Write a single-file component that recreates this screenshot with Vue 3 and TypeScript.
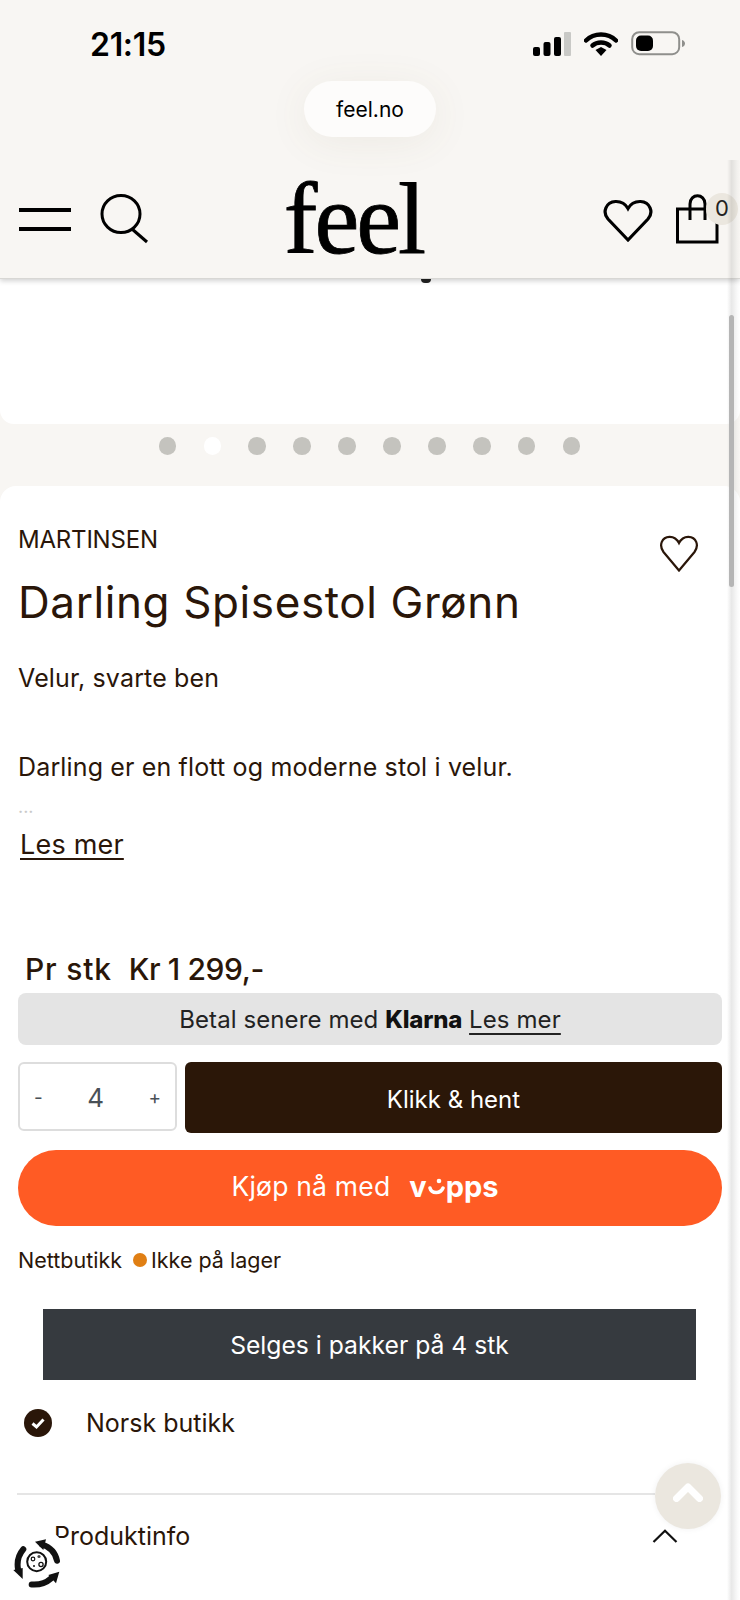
<script setup lang="ts">
const dots = Array.from({ length: 10 }, (_, i) => i)
</script>

<template>
  <div class="page">
    <header class="top">
      <div class="status">
        <span class="time">21:15</span>
        <div class="status-icons">
          <svg width="38" height="24" viewBox="0 0 38 24">
            <rect x="0" y="15" width="7" height="9" rx="2" fill="#000" />
            <rect x="10.500" y="10" width="7" height="14" rx="2" fill="#000" />
            <rect x="21" y="5" width="7" height="19" rx="2" fill="#000" />
            <rect x="31" y="0" width="7" height="24" rx="1" fill="#c9c9c6" />
          </svg>
          <svg width="34" height="24" viewBox="0 0 34 24">
            <path d="M2 8.500C10 0.500 24 0.500 32 8.500" fill="none" stroke="#000" stroke-width="4.500" stroke-linecap="round" />
            <path d="M8.500 13.500C13 9.500 21 9.500 25.500 13.500" fill="none" stroke="#000" stroke-width="4.500" stroke-linecap="round" />
            <path d="M11.500 18L17 15L22.500 18L17 24Z" fill="#000" />
          </svg>
          <svg class="battery" width="55" height="26" viewBox="0 0 55 26">
            <rect x="1.200" y="1.200" width="47" height="22" rx="7" fill="none" stroke="#8f8f8c" stroke-width="2" />
            <rect x="5" y="4.500" width="17" height="15.500" rx="5" fill="#000" />
            <path d="M51 9C53 9.500 54 11 54 12.500C54 14 53 15.500 51 16Z" fill="#8f8f8c" />
          </svg>
        </div>
      </div>
      <div class="pill-row">
        <span class="pill">feel.no</span>
      </div>
      <nav class="nav">
        <div class="nav-left">
          <span class="burger"><i></i><i></i></span>
          <svg class="search" width="50" height="50" viewBox="0 0 50 50">
            <ellipse cx="22" cy="20" rx="19" ry="18.500" fill="none" stroke="#000" stroke-width="3" />
            <path d="M33 35L48 48" stroke="#000" stroke-width="3" fill="none" />
          </svg>
        </div>
        <span class="logo">feel</span>
        <div class="nav-right">
          <svg class="heart" width="50" height="44" viewBox="0 0 50 44">
            <path d="M25 41L5 20C-1 13 3 3 12.500 2.500C18 2.300 22.500 5 25 9.500C27.500 5 32 2.300 37.500 2.500C47 3 51 13 45 20Z" fill="none" stroke="#000" stroke-width="3.200" stroke-linejoin="miter" />
          </svg>
          <div class="bag">
            <svg width="44" height="50" viewBox="0 0 44 50">
              <path d="M2.500 15H42V48H2.500Z" fill="none" stroke="#000" stroke-width="3" />
              <path d="M15 26V10C15 -1 30 -1 30 10V26" fill="none" stroke="#000" stroke-width="3" />
            </svg>
            <span class="bag-count">0</span>
          </div>
        </div>
      </nav>
    </header>

    <section class="hero">
      <span class="hero-tail"></span>
    </section>

    <div class="dots">
      <span v-for="d in dots" :key="d" class="dot" :class="{ active: d === 1 }"></span>
    </div>

    <main class="card">
      <div class="brand-row">
        <span class="brand">MARTINSEN</span>
        <svg class="fav" width="40" height="38" viewBox="0 0 40 38">
          <path d="M20 35.500L4.500 17C-0.500 10 3 2 10.500 1.800C14.500 1.700 18 4 20 8C22 4 25.500 1.700 29.500 1.800C37 2 40.500 10 35.500 17Z" fill="none" stroke="#2a1609" stroke-width="2.200" />
        </svg>
      </div>
      <h1 class="title">Darling Spisestol Grønn</h1>
      <p class="lead">Velur, svarte ben</p>
      <p class="desc">Darling er en flott og moderne stol i velur.</p>
      <p class="more-dots">...</p>
      <a class="read-more">Les mer</a>

      <div class="price">
        <span class="price-label">Pr stk</span>
        <span class="price-value">Kr 1 299,-</span>
      </div>
      <div class="klarna">
        <span>Betal senere med <b>Klarna</b> <u>Les mer</u></span>
      </div>

      <div class="buy-row">
        <div class="qty">
          <span class="qty-btn">-</span>
          <span class="qty-num">4</span>
          <span class="qty-btn">+</span>
        </div>
        <button class="pickup">Klikk &amp; hent</button>
      </div>

      <button class="vipps">
        <span>Kjøp nå med</span>
        <span class="vipps-logo">v<span class="smile"><svg width="17" height="20" viewBox="0 0 17 20"><circle cx="11" cy="4" r="2.300" fill="#fff" /><path d="M2 11C3.500 17 12.500 17 15 11" fill="none" stroke="#fff" stroke-width="3.500" stroke-linecap="round" /></svg></span>pps</span>
      </button>

      <div class="stock">
        <span>Nettbutikk</span>
        <span class="stock-dot"></span>
        <span>Ikke på lager</span>
      </div>

      <div class="pack">Selges i pakker på 4 stk</div>

      <div class="usp">
        <svg width="28" height="28" viewBox="0 0 28 28">
          <circle cx="14" cy="14" r="14" fill="#2a1609" />
          <path d="M8.500 14.500L12.500 18L19.500 10.500" fill="none" stroke="#fff" stroke-width="3" />
        </svg>
        <span>Norsk butikk</span>
      </div>

      <hr class="divider" />

      <div class="accordion">
        <span>Produktinfo</span>
        <svg width="26" height="14" viewBox="0 0 26 14">
          <path d="M1.500 13L13 1.800L24.500 13" fill="none" stroke="#111" stroke-width="2.200" />
        </svg>
      </div>
    </main>

    <!-- ting som ligger oppå siden -->
    <div class="edge"></div>
    <div class="scroll-thumb"></div>
    <button class="to-top">
      <svg width="30" height="20" viewBox="0 0 30 20">
        <path d="M3.500 16.500L15 5L26.500 16.500" fill="none" stroke="#fff" stroke-width="7" stroke-linecap="round" stroke-linejoin="round" />
      </svg>
    </button>
    <div class="cycle">
      <svg width="48" height="50" viewBox="0 0 48 50">
        <circle cx="23.700" cy="23.700" r="9.500" fill="#fff" stroke="#111" stroke-width="2" />
        <circle cx="20" cy="21" r="1.800" fill="none" stroke="#111" stroke-width="1.200" />
        <circle cx="26" cy="18.500" r="1.600" fill="#444" />
        <circle cx="28" cy="26.500" r="2.100" fill="none" stroke="#111" stroke-width="1.300" />
        <circle cx="21" cy="28" r="1" fill="#111" />
        <path d="M44 22.700C42.500 15 37 9 29 6.500" fill="none" stroke="#111" stroke-width="6" stroke-linecap="round" />
        <path d="M22 3.700L33 1.300L30.300 12Z" fill="#111" />
        <path d="M10.300 11.300C5.500 17 3.800 24 5 31" fill="none" stroke="#111" stroke-width="6" stroke-linecap="round" />
        <path d="M9.700 41L0.300 32L9.700 30Z" fill="#111" />
        <path d="M18.700 46.500C26 47 32.500 45.500 38 40.500" fill="none" stroke="#111" stroke-width="6" stroke-linecap="round" />
        <path d="M46.300 33.700L35.300 37L43 45.300Z" fill="#111" />
      </svg>
    </div>
  </div>
</template>

<style>
html,
body {
  margin: 0;
  background: #fff;
}
</style>

<style scoped>
.page {
  position: relative;
  width: 740px;
  height: 1600px;
  overflow: hidden;
  background: #f8f6f3;
  color: #2a1609;
  font-family: Inter, "Liberation Sans", sans-serif;
}

.top {
  position: relative;
  z-index: 2;
  height: 279px;
  box-sizing: border-box;
  background: #f8f6f3;
  border-bottom: 1px solid #d8d7d4;
  box-shadow: 0 2px 5px rgba(0, 0, 0, 0.18);
}

.status {
  display: flex;
  align-items: center;
  justify-content: space-between;
  height: 88px;
  padding: 0 54px 0 90px;
}

.time {
  font-size: 32px;
  font-weight: 600;
  color: #000;
  letter-spacing: -0.3px;
}

.status-icons {
  display: flex;
  align-items: center;
  gap: 13px;
}

.pill-row {
  display: flex;
  justify-content: center;
  height: 56px;
  margin-top: -7px;
}

.pill {
  display: flex;
  align-items: center;
  justify-content: center;
  width: 132px;
  height: 56px;
  border-radius: 28px;
  background: #fdfcfb;
  color: #000;
  font-size: 21px;
  box-shadow: 0 6px 40px rgba(120, 100, 70, 0.08);
}

.nav {
  display: flex;
  align-items: center;
  justify-content: space-between;
  height: 90px;
  margin-top: 37px;
  padding-left: 19px;
}

.nav-left {
  display: flex;
  align-items: center;
  gap: 28px;
}

.burger {
  display: flex;
  flex-direction: column;
  gap: 15px;
  width: 52px;
}

.burger i {
  display: block;
  height: 4px;
  background: #000;
}

.search {
  width: 50px;
  height: 50px;
}

.logo {
  margin-left: -45px;
  font-family: "Liberation Serif", serif;
  font-size: 101px;
  line-height: 90px;
  letter-spacing: -3px;
  color: #000;
  -webkit-text-stroke: 0.8px #000;
}

.nav-right {
  display: flex;
  align-items: center;
  gap: 22px;
  margin-right: 21px;
}

.heart {
  margin-top: 4px;
}

.bag {
  position: relative;
  width: 44px;
  height: 50px;
}

.bag-count {
  position: absolute;
  left: 31px;
  top: -1px;
  width: 32px;
  height: 32px;
  line-height: 30px;
  text-align: center;
  border-radius: 50%;
  background: #ebe7df;
  color: #222;
  font-size: 22px;
}

.hero {
  position: relative;
  height: 145px;
  background: #fff;
  border-radius: 0 0 14px 14px;
}

.hero-tail {
  position: absolute;
  left: 421px;
  top: 0;
  width: 10px;
  height: 4px;
  border-radius: 0 0 5px 5px;
  background: #222;
}

.dots {
  display: flex;
  justify-content: center;
  gap: 27.300px;
  height: 62px;
  padding-top: 13px;
  box-sizing: border-box;
  padding-right: 1px;
}

.dot {
  width: 17.600px;
  height: 17.600px;
  border-radius: 50%;
  background: #c4c3be;
}

.dot.active {
  background: #fff;
}

.card {
  height: 1114px;
  padding: 0 18px;
  background: #fff;
  border-radius: 16px 16px 0 0;
}

.brand-row {
  display: flex;
  align-items: flex-start;
  justify-content: space-between;
  padding: 39px 23px 0 0;
}

.brand {
  font-size: 24px;
  line-height: 30px;
  letter-spacing: -0.2px;
}

.fav {
  margin-top: 10px;
  margin-bottom: -48px;
}

.title {
  margin: 20px 0 0;
  font-size: 44px;
  line-height: 54px;
  font-weight: 400;
  letter-spacing: 0.6px;
}

.lead,
.desc {
  margin: 0;
  font-size: 25px;
  line-height: 32px;
  letter-spacing: 0.15px;
}

.lead {
  margin-top: 33px;
}

.desc {
  margin-top: 57px;
}

.more-dots {
  margin: 12px 0 0;
  font-size: 18px;
  line-height: 24px;
  color: #c9c9c9;
}

.read-more {
  display: block;
  width: fit-content;
  margin: 9px 0 0 2px;
  font-size: 27px;
  line-height: 34px;
  letter-spacing: 0.2px;
  text-decoration: underline;
  text-underline-offset: 4px;
}

.price {
  display: flex;
  gap: 17px;
  margin: 87px 0 0 7px;
  font-size: 30px;
  line-height: 40px;
  font-weight: 500;
}

.price-label {
  letter-spacing: 0.8px;
}

.price-value {
  letter-spacing: -0.4px;
}

.klarna {
  display: flex;
  align-items: center;
  justify-content: center;
  height: 52px;
  margin-top: 4px;
  border-radius: 8px;
  background: #e4e4e4;
  color: #222;
  font-size: 24px;
  letter-spacing: 0.1px;
}

.klarna b {
  font-weight: 800;
  color: #111;
  letter-spacing: -0.2px;
}

.klarna u {
  text-underline-offset: 5px;
}

.buy-row {
  display: flex;
  gap: 8px;
  margin-top: 17px;
}

.qty {
  display: flex;
  align-items: center;
  justify-content: space-between;
  box-sizing: border-box;
  width: 159px;
  height: 69px;
  padding: 2px 14px 0;
  border: 2px solid #ddd;
  border-radius: 6px;
  color: #495057;
}

.qty-btn {
  font-size: 19px;
}

.qty-num {
  font-size: 26px;
}

.pickup {
  flex: 1;
  height: 71px;
  padding: 4px 0 0;
  border: 0;
  border-radius: 6px;
  background: #2b1708;
  color: #fff;
  font: inherit;
  font-size: 24px;
}

.vipps {
  display: flex;
  align-items: center;
  justify-content: center;
  gap: 19px;
  width: 100%;
  height: 76px;
  margin-top: 17px;
  padding: 0 10px 4px 0;
  border: 0;
  border-radius: 38px;
  background: #ff5b24;
  color: #fff;
  font: inherit;
  font-size: 26.500px;
  letter-spacing: 0.2px;
}

.vipps-logo {
  display: flex;
  align-items: baseline;
  font-size: 29px;
  font-weight: 700;
  letter-spacing: 0;
}

.smile {
  display: inline-block;
  width: 17px;
  margin: 0 1px;
}

.stock {
  display: flex;
  align-items: center;
  height: 30px;
  margin-top: 19px;
  font-size: 21.500px;
}

.stock-dot {
  width: 14px;
  height: 14px;
  margin: 0 4px 0 11px;
  border-radius: 50%;
  background: #e07f14;
}

.pack {
  display: flex;
  align-items: center;
  justify-content: center;
  height: 71px;
  margin: 34px 26px 0 25px;
  background: #363a3f;
  color: #fff;
  font-size: 24.700px;
}

.usp {
  display: flex;
  align-items: center;
  gap: 34px;
  height: 30px;
  margin-top: 28px;
  padding-left: 6px;
  font-size: 25px;
}

.divider {
  width: 638px;
  height: 2px;
  margin: 55px 0 0 -1px;
  border: 0;
  background: #e5e5e5;
}

.accordion {
  display: flex;
  align-items: center;
  justify-content: space-between;
  height: 34px;
  margin-top: 24px;
  padding: 0 44px 0 36px;
  font-size: 25px;
}

.edge {
  position: absolute;
  left: 727px;
  right: 0;
  top: 160px;
  bottom: 0;
  z-index: 3;
  background: linear-gradient(to right, rgba(0, 0, 0, 0), rgba(0, 0, 0, 0.09) 35%, rgba(0, 0, 0, 0.02) 80%, rgba(0, 0, 0, 0));
}

.scroll-thumb {
  position: absolute;
  left: 729px;
  top: 315px;
  width: 5px;
  height: 272px;
  z-index: 3;
  border-radius: 3px;
  background: #b5b5b5;
}

.to-top {
  position: absolute;
  left: 655px;
  top: 1463px;
  z-index: 4;
  display: flex;
  align-items: center;
  justify-content: center;
  width: 66px;
  height: 66px;
  padding: 0 0 8px;
  border: 0;
  border-radius: 50%;
  background: #ebe7df;
  box-shadow: 0 0 6px rgba(0, 0, 0, 0.06);
}

.cycle {
  position: absolute;
  left: 4px;
  top: 1529px;
  z-index: 4;
  box-sizing: border-box;
  width: 66px;
  height: 66px;
  padding: 9px 0 0 9px;
  border-radius: 50%;
  background: #fff;
}
</style>
